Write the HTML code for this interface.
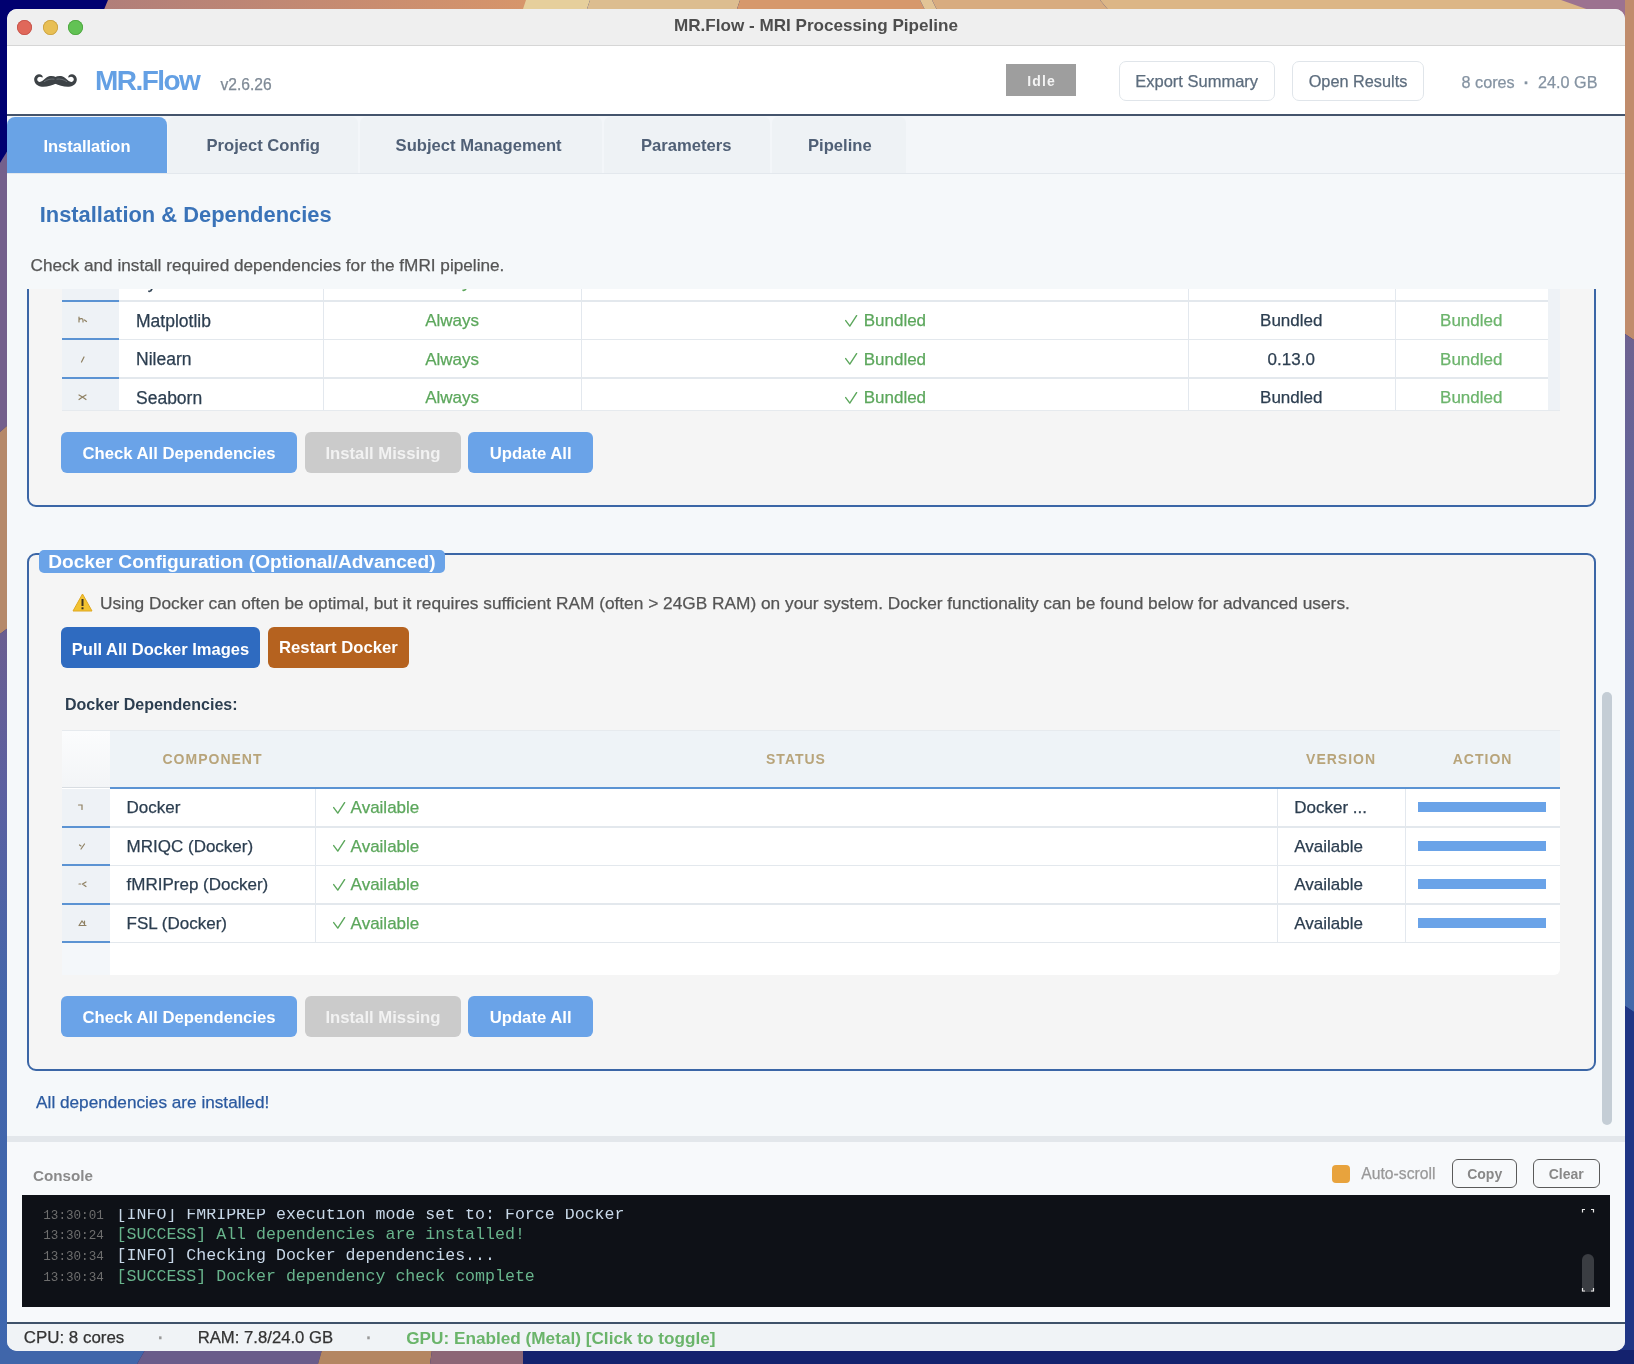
<!DOCTYPE html>
<html><head><meta charset="utf-8"><title>MR.Flow</title>
<style>html,body{margin:0;padding:0;width:1634px;height:1364px;overflow:hidden;background:#1b2a78}
body{position:relative;font-family:'Liberation Sans',sans-serif;-webkit-font-smoothing:antialiased}</style></head><body>

<svg style="position:absolute;left:0;top:0" width="1634" height="1364" viewBox="0 0 1634 1364">
 <defs>
  <linearGradient id="gt1" x1="0" x2="1" y1="0" y2="0">
   <stop offset="0" stop-color="#b07e7a"/>
   <stop offset="1" stop-color="#d8966a"/>
  </linearGradient>
  <linearGradient id="gl1" x1="0" x2="0" y1="0" y2="1">
   <stop offset="0" stop-color="#6a5e90"/>
   <stop offset="0.22" stop-color="#5c60a0"/>
   <stop offset="0.5" stop-color="#4466aa"/>
   <stop offset="1" stop-color="#3d66ae"/>
  </linearGradient>
  <linearGradient id="gr1" x1="0" x2="0" y1="0" y2="1">
   <stop offset="0" stop-color="#6e6290"/>
   <stop offset="0.4" stop-color="#5a64a0"/>
   <stop offset="0.7" stop-color="#4466a8"/>
   <stop offset="1" stop-color="#4268aa"/>
  </linearGradient>
 </defs>
 <rect x="0" y="0" width="1634" height="1364" fill="#16267a"/>
 <rect x="0" y="0" width="40" height="40" fill="#000070"/>
 <rect x="1590" y="0" width="44" height="40" fill="#d4a47c"/>
 <rect x="0" y="1320" width="40" height="44" fill="#4066aa"/>
 <rect x="1590" y="1320" width="44" height="44" fill="#1f3585"/>
 <!-- top strip -->
 <rect x="100" y="0" width="440" height="12" fill="url(#gt1)"/>
 <polygon points="0,0 108,0 103,12 0,12" fill="#000070"/>
 <polygon points="526,0 590,0 586,12 522,12" fill="#e6cf9c"/>
 <polygon points="590,0 740,0 736,12 586,12" fill="#dcbd90"/>
 <polygon points="740,0 920,0 926,12 736,12" fill="#d6986c"/>
 <polygon points="920,0 932,0 938,12 926,12" fill="#e2c496"/>
 <polygon points="932,0 1100,0 1110,12 938,12" fill="#d8ac80"/>
 <polygon points="1100,0 1634,0 1634,40 1590,40 1590,12 1110,12" fill="#dcb686"/>
 <polygon points="1561,0 1634,0 1634,26" fill="#9c7290"/>
 <!-- left strip -->
 <polygon points="0,0 8,0 8,150 0,163" fill="#000070"/>
 <polygon points="0,163 8,150 8,425 0,432" fill="#74608c"/>
 <polygon points="0,432 8,425 8,628 0,634" fill="#b5896a"/>
 <polygon points="0,634 8,628 8,1364 0,1364" fill="url(#gl1)"/>
 <!-- right strip -->
 <polygon points="1625,0 1634,0 1634,340 1625,334" fill="#c08c6c"/>
 <polygon points="1625,334 1634,340 1634,1012 1625,1006" fill="url(#gr1)"/>
 <polygon points="1625,1006 1634,1012 1634,1364 1625,1364" fill="#1f3585"/>
 <!-- bottom strip -->
 <polygon points="0,1350 145,1350 137,1364 0,1364" fill="#4066aa"/>
 <polygon points="145,1350 322,1350 318,1364 137,1364" fill="#6a5c8a"/>
 <polygon points="322,1350 432,1350 430,1364 318,1364" fill="#b48662"/>
 <polygon points="432,1350 523,1350 523,1364 430,1364" fill="#8c6676"/>
 <polygon points="523,1350 1634,1350 1634,1364 523,1364" fill="#14226e"/>
</svg>
<div style="position:absolute;left:7px;top:9px;width:1618px;height:1342px;border-radius:10px;overflow:hidden;background:#f5f8fa;will-change:transform">
<div style="position:absolute;left:-7px;top:-9px;width:1634px;height:1364px">
<div style="position:absolute;left:0px;top:9px;width:1634px;height:36px;background:#efefef"></div>
<div style="position:absolute;left:0px;top:45px;width:1634px;height:1px;background:#d6d6d6"></div>
<div style="position:absolute;left:17.1px;top:19.5px;width:15.0px;height:15.0px;border-radius:50%;background:#e0685a;box-shadow:inset 0 0 0 0.8px #c4524a"></div>
<div style="position:absolute;left:42.9px;top:19.5px;width:15.0px;height:15.0px;border-radius:50%;background:#e8bf54;box-shadow:inset 0 0 0 0.8px #c9a040"></div>
<div style="position:absolute;left:68.4px;top:19.5px;width:15.0px;height:15.0px;border-radius:50%;background:#62c254;box-shadow:inset 0 0 0 0.8px #4da43f"></div>
<div style="position:absolute;top:17.32px;font-family:'Liberation Sans', sans-serif;font-size:17.1px;line-height:17.1px;color:#4d4d4d;font-weight:bold;white-space:pre;left:216px;width:1200px;text-align:center;">MR.Flow - MRI Processing Pipeline</div>
<div style="position:absolute;left:0px;top:46px;width:1634px;height:68px;background:#ffffff"></div>
<div style="position:absolute;left:0px;top:114px;width:1634px;height:2px;background:#44546c"></div>
<svg style="position:absolute;left:28px;top:66px" width="56" height="28" viewBox="0 0 56 28">
<path d="M28.2,11.3 C25,9.6 20.5,9.6 17.5,12.2 C15.5,14 13.5,16 11.5,15.9 C9.8,15.8 8.9,14.2 9.3,12.8 C9.7,11.3 11.2,10.6 12.6,10.9 C13.6,11.1 14.3,11.6 14.7,11.4 C15.2,9.5 13,8 10.8,8.2 C8,8.5 6.1,11 6.2,13.8 C6.3,17.5 9.5,20.4 14,20.7 C19,21 24,19.5 28.2,17.5 Z" fill="#3d4246"/>
<path d="M28.2,11.3 C25,9.6 20.5,9.6 17.5,12.2 C15.5,14 13.5,16 11.5,15.9 C9.8,15.8 8.9,14.2 9.3,12.8 C9.7,11.3 11.2,10.6 12.6,10.9 C13.6,11.1 14.3,11.6 14.7,11.4 C15.2,9.5 13,8 10.8,8.2 C8,8.5 6.1,11 6.2,13.8 C6.3,17.5 9.5,20.4 14,20.7 C19,21 24,19.5 28.2,17.5 Z" fill="#3d4246" transform="translate(55,0) scale(-1,1)"/>
<path d="M16,15.8 C19,13.5 23,12.6 26.5,13.2" stroke="#8a9096" stroke-width="0.8" fill="none" opacity="0.7"/>
<path d="M39,15.8 C36,13.5 32,12.6 28.5,13.2" stroke="#8a9096" stroke-width="0.8" fill="none" opacity="0.7"/>
</svg>
<div style="position:absolute;top:67.40px;font-family:'Liberation Sans', sans-serif;font-size:28px;line-height:28px;color:#64a0e4;font-weight:bold;white-space:pre;letter-spacing:-1.55px;left:95.0px;">MR.Flow</div>
<div style="position:absolute;top:76.59px;font-family:'Liberation Sans', sans-serif;font-size:15.6px;line-height:15.6px;color:#7f8a96;font-weight:normal;white-space:pre;-webkit-text-stroke:0.25px currentColor;left:220.5px;">v2.6.26</div>
<div style="position:absolute;left:1006px;top:64px;width:70px;height:32px;background:#9e9e9e"></div>
<div style="position:absolute;top:73.95px;font-family:'Liberation Sans', sans-serif;font-size:14px;line-height:14px;color:#f4f4f4;font-weight:bold;white-space:pre;letter-spacing:1.2px;left:441px;width:1200px;text-align:center;text-indent:1.2px;">Idle</div>
<div style="position:absolute;left:1118.5px;top:60.5px;width:156.5px;height:40.0px;border:1px solid #e0e5ea;border-radius:7px;background:#fff;box-sizing:border-box"></div>
<div style="position:absolute;top:72.73px;font-family:'Liberation Sans', sans-serif;font-size:16.5px;line-height:16.5px;color:#5d6d7e;font-weight:normal;white-space:pre;-webkit-text-stroke:0.25px currentColor;left:596.7px;width:1200px;text-align:center;">Export Summary</div>
<div style="position:absolute;left:1292px;top:60.5px;width:132px;height:40.0px;border:1px solid #e0e5ea;border-radius:7px;background:#fff;box-sizing:border-box"></div>
<div style="position:absolute;top:72.90px;font-family:'Liberation Sans', sans-serif;font-size:16.3px;line-height:16.3px;color:#5d6d7e;font-weight:normal;white-space:pre;-webkit-text-stroke:0.25px currentColor;left:758px;width:1200px;text-align:center;">Open Results</div>
<div style="position:absolute;top:73.79px;font-family:'Liberation Sans', sans-serif;font-size:16.2px;line-height:16.2px;color:#8593a2;font-weight:normal;white-space:pre;-webkit-text-stroke:0.25px currentColor;left:1461.6px;">8 cores  <b>·</b>  24.0 GB</div>
<div style="position:absolute;left:0px;top:116px;width:1634px;height:57px;background:#f3f6f9"></div>
<div style="position:absolute;left:0px;top:173px;width:1634px;height:1px;background:#e3e8ed"></div>
<div style="position:absolute;left:7px;top:117px;width:160px;height:56px;background:#69a3e6;border-radius:8px 8px 0 0"></div>
<div style="position:absolute;top:138.03px;font-family:'Liberation Sans', sans-serif;font-size:16.5px;line-height:16.5px;color:#ffffff;font-weight:bold;white-space:pre;left:43.4px;">Installation</div>
<div style="position:absolute;left:168px;top:117px;width:189.5px;height:56px;background:#eef2f5;border-radius:6px 6px 0 0"></div>
<div style="position:absolute;top:138.15px;font-family:'Liberation Sans', sans-serif;font-size:16.6px;line-height:16.6px;color:#506076;font-weight:bold;white-space:pre;left:206.5px;">Project Config</div>
<div style="position:absolute;left:359.5px;top:117px;width:242.89999999999998px;height:56px;background:#eef2f5;border-radius:6px 6px 0 0"></div>
<div style="position:absolute;top:138.15px;font-family:'Liberation Sans', sans-serif;font-size:16.6px;line-height:16.6px;color:#506076;font-weight:bold;white-space:pre;left:395.6px;">Subject Management</div>
<div style="position:absolute;left:604.4px;top:117px;width:165.30000000000007px;height:56px;background:#eef2f5;border-radius:6px 6px 0 0"></div>
<div style="position:absolute;top:138.15px;font-family:'Liberation Sans', sans-serif;font-size:16.6px;line-height:16.6px;color:#506076;font-weight:bold;white-space:pre;left:641px;">Parameters</div>
<div style="position:absolute;left:771.7px;top:117px;width:134.29999999999995px;height:56px;background:#eef2f5;border-radius:6px 6px 0 0"></div>
<div style="position:absolute;top:138.15px;font-family:'Liberation Sans', sans-serif;font-size:16.6px;line-height:16.6px;color:#506076;font-weight:bold;white-space:pre;left:808px;">Pipeline</div>
<div style="position:absolute;top:203.96px;font-family:'Liberation Sans', sans-serif;font-size:21.9px;line-height:21.9px;color:#3a73b8;font-weight:bold;white-space:pre;left:39.7px;">Installation &amp; Dependencies</div>
<div style="position:absolute;top:257.24px;font-family:'Liberation Sans', sans-serif;font-size:17.2px;line-height:17.2px;color:#555555;font-weight:normal;white-space:pre;-webkit-text-stroke:0.25px currentColor;left:30.5px;">Check and install required dependencies for the fMRI pipeline.</div>
<div style="position:absolute;left:0;top:289px;width:1634px;height:847px;overflow:hidden">
<div style="position:absolute;left:0;top:-289px;width:1634px;height:1364px">
<div style="position:absolute;left:27px;top:150px;width:1569px;height:357px;border:2px solid #3b66a6;border-radius:9px;background:#f5f5f5;box-sizing:border-box"></div>
<div style="position:absolute;left:62px;top:250px;width:1486px;height:160px;background:#ffffff"></div>
<div style="position:absolute;left:1548px;top:250px;width:12px;height:160px;background:#eef2f6"></div>
<div style="position:absolute;left:62px;top:250px;width:56.5px;height:160px;background:#eef2f6"></div>
<div style="position:absolute;left:323.4px;top:250px;width:1.0px;height:160px;background:#e3e8ee"></div>
<div style="position:absolute;left:580.7px;top:250px;width:1.0px;height:160px;background:#e3e8ee"></div>
<div style="position:absolute;left:1188px;top:250px;width:1px;height:160px;background:#e3e8ee"></div>
<div style="position:absolute;left:1394.5px;top:250px;width:1.0px;height:160px;background:#e3e8ee"></div>
<div style="position:absolute;left:118.5px;top:300.3px;width:1429.5px;height:1.5px;background:#e3e8ed"></div>
<div style="position:absolute;left:62px;top:299.5px;width:56.5px;height:2.0px;background:#5b93d3"></div>
<div style="position:absolute;left:118.5px;top:338.8px;width:1429.5px;height:1.5px;background:#e3e8ed"></div>
<div style="position:absolute;left:62px;top:338px;width:56.5px;height:2px;background:#5b93d3"></div>
<div style="position:absolute;left:118.5px;top:377.3px;width:1429.5px;height:1.5px;background:#e3e8ed"></div>
<div style="position:absolute;left:62px;top:376.5px;width:56.5px;height:2.0px;background:#5b93d3"></div>
<div style="position:absolute;left:62px;top:409.5px;width:1498px;height:1.0px;background:#e6eaee"></div>
<div style="position:absolute;top:274.09px;font-family:'Liberation Sans', sans-serif;font-size:17.5px;line-height:17.5px;color:#2c3e50;font-weight:normal;white-space:pre;-webkit-text-stroke:0.25px currentColor;left:136px;">PyBIDS</div>
<div style="position:absolute;top:273.51px;font-family:'Liberation Sans', sans-serif;font-size:17px;line-height:17px;color:#5ca75c;font-weight:normal;white-space:pre;-webkit-text-stroke:0.25px currentColor;left:-147.95px;width:1200px;text-align:center;">Always</div>
<svg style="position:absolute;left:844.6px;top:276.2px" width="13" height="13" viewBox="0 0 13 13"><polyline points="0.7,5.6 4.8,11.1 11.6,0.7" fill="none" stroke="#5ca75c" stroke-width="1.4" stroke-linecap="round" stroke-linejoin="round"/></svg>
<div style="position:absolute;top:273.51px;font-family:'Liberation Sans', sans-serif;font-size:17px;line-height:17px;color:#5ca75c;font-weight:normal;white-space:pre;-webkit-text-stroke:0.25px currentColor;left:863.7px;">Bundled</div>
<div style="position:absolute;top:273.51px;font-family:'Liberation Sans', sans-serif;font-size:17px;line-height:17px;color:#2c3e50;font-weight:normal;white-space:pre;-webkit-text-stroke:0.25px currentColor;left:691.25px;width:1200px;text-align:center;">Bundled</div>
<div style="position:absolute;top:273.51px;font-family:'Liberation Sans', sans-serif;font-size:17px;line-height:17px;color:#6cb46c;font-weight:normal;white-space:pre;-webkit-text-stroke:0.25px currentColor;left:871.25px;width:1200px;text-align:center;">Bundled</div>
<div style="position:absolute;top:312.59px;font-family:'Liberation Sans', sans-serif;font-size:17.5px;line-height:17.5px;color:#2c3e50;font-weight:normal;white-space:pre;-webkit-text-stroke:0.25px currentColor;left:136px;">Matplotlib</div>
<div style="position:absolute;top:312.01px;font-family:'Liberation Sans', sans-serif;font-size:17px;line-height:17px;color:#5ca75c;font-weight:normal;white-space:pre;-webkit-text-stroke:0.25px currentColor;left:-147.95px;width:1200px;text-align:center;">Always</div>
<svg style="position:absolute;left:844.6px;top:314.7px" width="13" height="13" viewBox="0 0 13 13"><polyline points="0.7,5.6 4.8,11.1 11.6,0.7" fill="none" stroke="#5ca75c" stroke-width="1.4" stroke-linecap="round" stroke-linejoin="round"/></svg>
<div style="position:absolute;top:312.01px;font-family:'Liberation Sans', sans-serif;font-size:17px;line-height:17px;color:#5ca75c;font-weight:normal;white-space:pre;-webkit-text-stroke:0.25px currentColor;left:863.7px;">Bundled</div>
<div style="position:absolute;top:312.01px;font-family:'Liberation Sans', sans-serif;font-size:17px;line-height:17px;color:#2c3e50;font-weight:normal;white-space:pre;-webkit-text-stroke:0.25px currentColor;left:691.25px;width:1200px;text-align:center;">Bundled</div>
<div style="position:absolute;top:312.01px;font-family:'Liberation Sans', sans-serif;font-size:17px;line-height:17px;color:#6cb46c;font-weight:normal;white-space:pre;-webkit-text-stroke:0.25px currentColor;left:871.25px;width:1200px;text-align:center;">Bundled</div>
<div style="position:absolute;top:351.09px;font-family:'Liberation Sans', sans-serif;font-size:17.5px;line-height:17.5px;color:#2c3e50;font-weight:normal;white-space:pre;-webkit-text-stroke:0.25px currentColor;left:136px;">Nilearn</div>
<div style="position:absolute;top:350.51px;font-family:'Liberation Sans', sans-serif;font-size:17px;line-height:17px;color:#5ca75c;font-weight:normal;white-space:pre;-webkit-text-stroke:0.25px currentColor;left:-147.95px;width:1200px;text-align:center;">Always</div>
<svg style="position:absolute;left:844.6px;top:353.2px" width="13" height="13" viewBox="0 0 13 13"><polyline points="0.7,5.6 4.8,11.1 11.6,0.7" fill="none" stroke="#5ca75c" stroke-width="1.4" stroke-linecap="round" stroke-linejoin="round"/></svg>
<div style="position:absolute;top:350.51px;font-family:'Liberation Sans', sans-serif;font-size:17px;line-height:17px;color:#5ca75c;font-weight:normal;white-space:pre;-webkit-text-stroke:0.25px currentColor;left:863.7px;">Bundled</div>
<div style="position:absolute;top:350.51px;font-family:'Liberation Sans', sans-serif;font-size:17px;line-height:17px;color:#2c3e50;font-weight:normal;white-space:pre;-webkit-text-stroke:0.25px currentColor;left:691.25px;width:1200px;text-align:center;">0.13.0</div>
<div style="position:absolute;top:350.51px;font-family:'Liberation Sans', sans-serif;font-size:17px;line-height:17px;color:#6cb46c;font-weight:normal;white-space:pre;-webkit-text-stroke:0.25px currentColor;left:871.25px;width:1200px;text-align:center;">Bundled</div>
<div style="position:absolute;top:389.59px;font-family:'Liberation Sans', sans-serif;font-size:17.5px;line-height:17.5px;color:#2c3e50;font-weight:normal;white-space:pre;-webkit-text-stroke:0.25px currentColor;left:136px;">Seaborn</div>
<div style="position:absolute;top:389.01px;font-family:'Liberation Sans', sans-serif;font-size:17px;line-height:17px;color:#5ca75c;font-weight:normal;white-space:pre;-webkit-text-stroke:0.25px currentColor;left:-147.95px;width:1200px;text-align:center;">Always</div>
<svg style="position:absolute;left:844.6px;top:391.7px" width="13" height="13" viewBox="0 0 13 13"><polyline points="0.7,5.6 4.8,11.1 11.6,0.7" fill="none" stroke="#5ca75c" stroke-width="1.4" stroke-linecap="round" stroke-linejoin="round"/></svg>
<div style="position:absolute;top:389.01px;font-family:'Liberation Sans', sans-serif;font-size:17px;line-height:17px;color:#5ca75c;font-weight:normal;white-space:pre;-webkit-text-stroke:0.25px currentColor;left:863.7px;">Bundled</div>
<div style="position:absolute;top:389.01px;font-family:'Liberation Sans', sans-serif;font-size:17px;line-height:17px;color:#2c3e50;font-weight:normal;white-space:pre;-webkit-text-stroke:0.25px currentColor;left:691.25px;width:1200px;text-align:center;">Bundled</div>
<div style="position:absolute;top:389.01px;font-family:'Liberation Sans', sans-serif;font-size:17px;line-height:17px;color:#6cb46c;font-weight:normal;white-space:pre;-webkit-text-stroke:0.25px currentColor;left:871.25px;width:1200px;text-align:center;">Bundled</div>
<svg style="position:absolute;left:77.5px;top:316.3px" width="10" height="8" viewBox="0 0 10 8"><path d="M1,1 L1,6 M1,3.5 C3,2 5,2.5 5,4 L5,6 M6.5,4 L8.5,5.5" fill="none" stroke="#8f8062" stroke-width="1.2" stroke-linecap="round"/></svg>
<svg style="position:absolute;left:79.5px;top:355.5px" width="10" height="8" viewBox="0 0 10 8"><path d="M4,1 L1.5,6" fill="none" stroke="#8f8062" stroke-width="1.2" stroke-linecap="round"/></svg>
<svg style="position:absolute;left:77.5px;top:393.5px" width="10" height="8" viewBox="0 0 10 8"><path d="M1,1 L4.5,3 L1,5.5 M8,1 L4.5,3 L8,5.5" fill="none" stroke="#8f8062" stroke-width="1.2" stroke-linecap="round"/></svg>
<div style="position:absolute;left:61px;top:432px;width:236px;height:41px;background:#6aa3e8;border-radius:6px"></div>
<div style="position:absolute;top:445.86px;font-family:'Liberation Sans', sans-serif;font-size:16.7px;line-height:16.7px;color:#ffffff;font-weight:bold;white-space:pre;left:-421.0px;width:1200px;text-align:center;">Check All Dependencies</div>
<div style="position:absolute;left:305.3px;top:432px;width:155.3px;height:41px;background:#cbcbcb;border-radius:6px"></div>
<div style="position:absolute;top:445.86px;font-family:'Liberation Sans', sans-serif;font-size:16.7px;line-height:16.7px;color:#f2f2f2;font-weight:bold;white-space:pre;left:-217.04999999999995px;width:1200px;text-align:center;">Install Missing</div>
<div style="position:absolute;left:468px;top:432px;width:125.20000000000005px;height:41px;background:#6aa3e8;border-radius:6px"></div>
<div style="position:absolute;top:445.86px;font-family:'Liberation Sans', sans-serif;font-size:16.7px;line-height:16.7px;color:#ffffff;font-weight:bold;white-space:pre;left:-69.39999999999998px;width:1200px;text-align:center;">Update All</div>
<div style="position:absolute;left:27px;top:553px;width:1569px;height:518px;border:2px solid #3b66a6;border-radius:9px;background:#f5f5f5;box-sizing:border-box"></div>
<div style="position:absolute;left:38.8px;top:550px;width:406.2px;height:23px;background:#6aa3e8;border-radius:5px"></div>
<div style="position:absolute;top:552.03px;font-family:'Liberation Sans', sans-serif;font-size:19.1px;line-height:19.1px;color:#ffffff;font-weight:bold;white-space:pre;left:48.3px;">Docker Configuration (Optional/Advanced)</div>
<svg style="position:absolute;left:72px;top:593px" width="21" height="19" viewBox="0 0 21 19">
<path d="M10.5 1 L20 18 L1 18 Z" fill="#f2c230" stroke="#e0a820" stroke-width="1" stroke-linejoin="round"/>
<rect x="9.5" y="6" width="2" height="7" fill="#3a3020"/><rect x="9.5" y="14.3" width="2" height="2" fill="#3a3020"/>
</svg>
<div style="position:absolute;top:594.86px;font-family:'Liberation Sans', sans-serif;font-size:17.3px;line-height:17.3px;color:#555555;font-weight:normal;white-space:pre;-webkit-text-stroke:0.25px currentColor;left:100px;">Using Docker can often be optimal, but it requires sufficient RAM (often &gt; 24GB RAM) on your system. Docker functionality can be found below for advanced users.</div>
<div style="position:absolute;left:61px;top:627px;width:199px;height:41px;background:#2f6bc0;border-radius:6px"></div>
<div style="position:absolute;top:640.63px;font-family:'Liberation Sans', sans-serif;font-size:16.5px;line-height:16.5px;color:#ffffff;font-weight:bold;white-space:pre;left:-439.5px;width:1200px;text-align:center;">Pull All Docker Images</div>
<div style="position:absolute;left:268px;top:627px;width:140.8px;height:41px;background:#b5621f;border-radius:6px"></div>
<div style="position:absolute;top:640.46px;font-family:'Liberation Sans', sans-serif;font-size:16.7px;line-height:16.7px;color:#ffffff;font-weight:bold;white-space:pre;left:-261.6px;width:1200px;text-align:center;">Restart Docker</div>
<div style="position:absolute;top:697.26px;font-family:'Liberation Sans', sans-serif;font-size:16px;line-height:16px;color:#2c3e50;font-weight:bold;white-space:pre;left:65px;">Docker Dependencies:</div>
<div style="position:absolute;left:62px;top:729.5px;width:1497.5px;height:245.5px;background:#ffffff;border-radius:0 0 6px 6px"></div>
<div style="position:absolute;left:62px;top:729.5px;width:1497.5px;height:1.0px;background:#e6eaee"></div>
<div style="position:absolute;left:109.5px;top:730.5px;width:1450.0px;height:56.0px;background:#eef3f7"></div>
<div style="position:absolute;left:62px;top:730.5px;width:47.5px;height:56.0px;background:linear-gradient(#fbfcfd,#f3f5f7)"></div>
<div style="position:absolute;left:109.5px;top:786.5px;width:1450.0px;height:2.0px;background:#5b93d3"></div>
<div style="position:absolute;left:62px;top:786.5px;width:47.5px;height:1.0px;background:#d8dde2"></div>
<div style="position:absolute;left:62px;top:788.5px;width:47.5px;height:153.5px;background:#eef2f6"></div>
<div style="position:absolute;left:62px;top:942px;width:47.5px;height:33px;background:#f4f7fa"></div>
<div style="position:absolute;left:314.5px;top:788.5px;width:1.0px;height:153.5px;background:#e3e8ee"></div>
<div style="position:absolute;left:1276.5px;top:788.5px;width:1.0px;height:153.5px;background:#e3e8ee"></div>
<div style="position:absolute;left:1404.7px;top:788.5px;width:1.0px;height:153.5px;background:#e3e8ee"></div>
<div style="position:absolute;top:752.15px;font-family:'Liberation Sans', sans-serif;font-size:14px;line-height:14px;color:#b8a47a;font-weight:bold;white-space:pre;letter-spacing:1px;left:-388.0px;width:1200px;text-align:center;text-indent:1px;">COMPONENT</div>
<div style="position:absolute;top:752.15px;font-family:'Liberation Sans', sans-serif;font-size:14px;line-height:14px;color:#b8a47a;font-weight:bold;white-space:pre;letter-spacing:1px;left:195.5px;width:1200px;text-align:center;text-indent:1px;">STATUS</div>
<div style="position:absolute;top:752.15px;font-family:'Liberation Sans', sans-serif;font-size:14px;line-height:14px;color:#b8a47a;font-weight:bold;white-space:pre;letter-spacing:1px;left:740.5999999999999px;width:1200px;text-align:center;text-indent:1px;">VERSION</div>
<div style="position:absolute;top:752.15px;font-family:'Liberation Sans', sans-serif;font-size:14px;line-height:14px;color:#b8a47a;font-weight:bold;white-space:pre;letter-spacing:1px;left:882.0999999999999px;width:1200px;text-align:center;text-indent:1px;">ACTION</div>
<div style="position:absolute;left:109.5px;top:826.3px;width:1450.0px;height:1.5px;background:#e3e8ed"></div>
<div style="position:absolute;left:62px;top:825.5px;width:47.5px;height:2.0px;background:#5b93d3"></div>
<div style="position:absolute;left:109.5px;top:864.8px;width:1450.0px;height:1.5px;background:#e3e8ed"></div>
<div style="position:absolute;left:62px;top:864px;width:47.5px;height:2px;background:#5b93d3"></div>
<div style="position:absolute;left:109.5px;top:903.3px;width:1450.0px;height:1.5px;background:#e3e8ed"></div>
<div style="position:absolute;left:62px;top:902.5px;width:47.5px;height:2.0px;background:#5b93d3"></div>
<div style="position:absolute;left:109.5px;top:941.8px;width:1450.0px;height:1.5px;background:#e3e8ed"></div>
<div style="position:absolute;left:62px;top:941px;width:47.5px;height:2px;background:#5b93d3"></div>
<div style="position:absolute;top:799.41px;font-family:'Liberation Sans', sans-serif;font-size:17px;line-height:17px;color:#2c3e50;font-weight:normal;white-space:pre;-webkit-text-stroke:0.25px currentColor;left:126.6px;">Docker</div>
<svg style="position:absolute;left:333.0px;top:801.5999999999999px" width="13" height="13" viewBox="0 0 13 13"><polyline points="0.7,5.6 4.8,11.1 11.6,0.7" fill="none" stroke="#5ca75c" stroke-width="1.4" stroke-linecap="round" stroke-linejoin="round"/></svg>
<div style="position:absolute;top:799.41px;font-family:'Liberation Sans', sans-serif;font-size:17px;line-height:17px;color:#5ca75c;font-weight:normal;white-space:pre;-webkit-text-stroke:0.25px currentColor;left:350.6px;">Available</div>
<div style="position:absolute;top:799.41px;font-family:'Liberation Sans', sans-serif;font-size:17px;line-height:17px;color:#2c3e50;font-weight:normal;white-space:pre;-webkit-text-stroke:0.25px currentColor;left:1294.3px;">Docker ...</div>
<div style="position:absolute;left:1418.4px;top:802.0px;width:127.19999999999982px;height:10.200000000000045px;background:#6aa3e8"></div>
<div style="position:absolute;top:837.91px;font-family:'Liberation Sans', sans-serif;font-size:17px;line-height:17px;color:#2c3e50;font-weight:normal;white-space:pre;-webkit-text-stroke:0.25px currentColor;left:126.6px;">MRIQC (Docker)</div>
<svg style="position:absolute;left:333.0px;top:840.0999999999999px" width="13" height="13" viewBox="0 0 13 13"><polyline points="0.7,5.6 4.8,11.1 11.6,0.7" fill="none" stroke="#5ca75c" stroke-width="1.4" stroke-linecap="round" stroke-linejoin="round"/></svg>
<div style="position:absolute;top:837.91px;font-family:'Liberation Sans', sans-serif;font-size:17px;line-height:17px;color:#5ca75c;font-weight:normal;white-space:pre;-webkit-text-stroke:0.25px currentColor;left:350.6px;">Available</div>
<div style="position:absolute;top:837.91px;font-family:'Liberation Sans', sans-serif;font-size:17px;line-height:17px;color:#2c3e50;font-weight:normal;white-space:pre;-webkit-text-stroke:0.25px currentColor;left:1294.3px;">Available</div>
<div style="position:absolute;left:1418.4px;top:840.5px;width:127.19999999999982px;height:10.200000000000045px;background:#6aa3e8"></div>
<div style="position:absolute;top:876.41px;font-family:'Liberation Sans', sans-serif;font-size:17px;line-height:17px;color:#2c3e50;font-weight:normal;white-space:pre;-webkit-text-stroke:0.25px currentColor;left:126.6px;">fMRIPrep (Docker)</div>
<svg style="position:absolute;left:333.0px;top:878.5999999999999px" width="13" height="13" viewBox="0 0 13 13"><polyline points="0.7,5.6 4.8,11.1 11.6,0.7" fill="none" stroke="#5ca75c" stroke-width="1.4" stroke-linecap="round" stroke-linejoin="round"/></svg>
<div style="position:absolute;top:876.41px;font-family:'Liberation Sans', sans-serif;font-size:17px;line-height:17px;color:#5ca75c;font-weight:normal;white-space:pre;-webkit-text-stroke:0.25px currentColor;left:350.6px;">Available</div>
<div style="position:absolute;top:876.41px;font-family:'Liberation Sans', sans-serif;font-size:17px;line-height:17px;color:#2c3e50;font-weight:normal;white-space:pre;-webkit-text-stroke:0.25px currentColor;left:1294.3px;">Available</div>
<div style="position:absolute;left:1418.4px;top:879.0px;width:127.19999999999982px;height:10.200000000000045px;background:#6aa3e8"></div>
<div style="position:absolute;top:914.91px;font-family:'Liberation Sans', sans-serif;font-size:17px;line-height:17px;color:#2c3e50;font-weight:normal;white-space:pre;-webkit-text-stroke:0.25px currentColor;left:126.6px;">FSL (Docker)</div>
<svg style="position:absolute;left:333.0px;top:917.0999999999999px" width="13" height="13" viewBox="0 0 13 13"><polyline points="0.7,5.6 4.8,11.1 11.6,0.7" fill="none" stroke="#5ca75c" stroke-width="1.4" stroke-linecap="round" stroke-linejoin="round"/></svg>
<div style="position:absolute;top:914.91px;font-family:'Liberation Sans', sans-serif;font-size:17px;line-height:17px;color:#5ca75c;font-weight:normal;white-space:pre;-webkit-text-stroke:0.25px currentColor;left:350.6px;">Available</div>
<div style="position:absolute;top:914.91px;font-family:'Liberation Sans', sans-serif;font-size:17px;line-height:17px;color:#2c3e50;font-weight:normal;white-space:pre;-webkit-text-stroke:0.25px currentColor;left:1294.3px;">Available</div>
<div style="position:absolute;left:1418.4px;top:917.5px;width:127.19999999999982px;height:10.200000000000045px;background:#6aa3e8"></div>
<svg style="position:absolute;left:76.5px;top:804px" width="10" height="8" viewBox="0 0 10 8"><path d="M1.5,1 L5,1 L5,5.5" fill="none" stroke="#8f8062" stroke-width="1.2" stroke-linecap="round"/></svg>
<svg style="position:absolute;left:77.5px;top:843px" width="10" height="8" viewBox="0 0 10 8"><path d="M1.5,2 L3,3 M6.5,1 L3,6" fill="none" stroke="#8f8062" stroke-width="1.2" stroke-linecap="round"/></svg>
<svg style="position:absolute;left:77.5px;top:881px" width="10" height="8" viewBox="0 0 10 8"><path d="M1,3 L2.5,3 M8,1 L4.5,3 L8,5.5" fill="none" stroke="#8f8062" stroke-width="1.2" stroke-linecap="round"/></svg>
<svg style="position:absolute;left:77.5px;top:920px" width="10" height="8" viewBox="0 0 10 8"><path d="M1,5.5 L4,1 L5.5,3 M2,5.5 L8,5.5 M6.5,1 L6.5,5.5" fill="none" stroke="#8f8062" stroke-width="1.2" stroke-linecap="round"/></svg>
<div style="position:absolute;left:61px;top:996px;width:236px;height:41px;background:#6aa3e8;border-radius:6px"></div>
<div style="position:absolute;top:1009.86px;font-family:'Liberation Sans', sans-serif;font-size:16.7px;line-height:16.7px;color:#ffffff;font-weight:bold;white-space:pre;left:-421.0px;width:1200px;text-align:center;">Check All Dependencies</div>
<div style="position:absolute;left:305.3px;top:996px;width:155.3px;height:41px;background:#cbcbcb;border-radius:6px"></div>
<div style="position:absolute;top:1009.86px;font-family:'Liberation Sans', sans-serif;font-size:16.7px;line-height:16.7px;color:#f2f2f2;font-weight:bold;white-space:pre;left:-217.04999999999995px;width:1200px;text-align:center;">Install Missing</div>
<div style="position:absolute;left:468px;top:996px;width:125.20000000000005px;height:41px;background:#6aa3e8;border-radius:6px"></div>
<div style="position:absolute;top:1009.86px;font-family:'Liberation Sans', sans-serif;font-size:16.7px;line-height:16.7px;color:#ffffff;font-weight:bold;white-space:pre;left:-69.39999999999998px;width:1200px;text-align:center;">Update All</div>
<div style="position:absolute;top:1094.44px;font-family:'Liberation Sans', sans-serif;font-size:17.2px;line-height:17.2px;color:#2b5aa0;font-weight:normal;white-space:pre;-webkit-text-stroke:0.25px currentColor;left:36.1px;">All dependencies are installed!</div>
</div></div>
<div style="position:absolute;left:1602px;top:692px;width:10px;height:433px;background:#c4cdd5;border-radius:5px"></div>
<div style="position:absolute;left:0px;top:1136px;width:1634px;height:6px;background:#e3e7eb"></div>
<div style="position:absolute;left:0px;top:1142px;width:1634px;height:180px;background:#f7f9fb"></div>
<div style="position:absolute;top:1168.13px;font-family:'Liberation Sans', sans-serif;font-size:15.2px;line-height:15.2px;color:#8a8a8a;font-weight:bold;white-space:pre;left:33.1px;">Console</div>
<div style="position:absolute;left:1332.3px;top:1164.7px;width:18.200000000000045px;height:18.0px;background:#e8a33d;border-radius:4px"></div>
<div style="position:absolute;top:1165.71px;font-family:'Liberation Sans', sans-serif;font-size:15.7px;line-height:15.7px;color:#999999;font-weight:normal;white-space:pre;-webkit-text-stroke:0.25px currentColor;left:1361.3px;">Auto-scroll</div>
<div style="position:absolute;left:1452.3px;top:1158.6px;width:64.79999999999995px;height:29.800000000000182px;border:1.5px solid #5a5a5a;border-radius:6px;box-sizing:border-box"></div>
<div style="position:absolute;top:1167.15px;font-family:'Liberation Sans', sans-serif;font-size:14px;line-height:14px;color:#888888;font-weight:bold;white-space:pre;left:884.6999999999998px;width:1200px;text-align:center;">Copy</div>
<div style="position:absolute;left:1533px;top:1158.6px;width:66.5px;height:29.800000000000182px;border:1.5px solid #5a5a5a;border-radius:6px;box-sizing:border-box"></div>
<div style="position:absolute;top:1167.15px;font-family:'Liberation Sans', sans-serif;font-size:14px;line-height:14px;color:#888888;font-weight:bold;white-space:pre;left:966.25px;width:1200px;text-align:center;">Clear</div>
<div style="position:absolute;left:22px;top:1194.5px;width:1588px;height:112.5px;background:#0e1117"></div>
<div style="position:absolute;left:22px;top:1209px;width:1588px;height:98px;overflow:hidden"><div style="position:absolute;left:-22px;top:-1209px;width:1634px;height:1364px">
<div style="position:absolute;top:1209.74px;font-family:'Liberation Mono', monospace;font-size:12.6px;line-height:12.6px;color:#6e6e6e;font-weight:normal;white-space:pre;left:43.3px;">13:30:01</div>
<div style="position:absolute;top:1206.68px;font-family:'Liberation Mono', monospace;font-size:16.6px;line-height:16.6px;color:#c8d8e8;font-weight:normal;white-space:pre;left:116.6px;">[INFO] FMRIPREP execution mode set to: Force Docker</div>
<div style="position:absolute;top:1230.44px;font-family:'Liberation Mono', monospace;font-size:12.6px;line-height:12.6px;color:#6e6e6e;font-weight:normal;white-space:pre;left:43.3px;">13:30:24</div>
<div style="position:absolute;top:1227.38px;font-family:'Liberation Mono', monospace;font-size:16.6px;line-height:16.6px;color:#68b48c;font-weight:normal;white-space:pre;left:116.6px;">[SUCCESS] All dependencies are installed!</div>
<div style="position:absolute;top:1251.14px;font-family:'Liberation Mono', monospace;font-size:12.6px;line-height:12.6px;color:#6e6e6e;font-weight:normal;white-space:pre;left:43.3px;">13:30:34</div>
<div style="position:absolute;top:1248.08px;font-family:'Liberation Mono', monospace;font-size:16.6px;line-height:16.6px;color:#c8d8e8;font-weight:normal;white-space:pre;left:116.6px;">[INFO] Checking Docker dependencies...</div>
<div style="position:absolute;top:1271.84px;font-family:'Liberation Mono', monospace;font-size:12.6px;line-height:12.6px;color:#6e6e6e;font-weight:normal;white-space:pre;left:43.3px;">13:30:34</div>
<div style="position:absolute;top:1268.78px;font-family:'Liberation Mono', monospace;font-size:16.6px;line-height:16.6px;color:#68b48c;font-weight:normal;white-space:pre;left:116.6px;">[SUCCESS] Docker dependency check complete</div>
</div></div>
<div style="position:absolute;left:1582px;top:1254px;width:12px;height:38px;background:#3a3d42;border-radius:6px 6px 1px 1px"></div>
<svg style="position:absolute;left:1580px;top:1207px" width="16" height="90" viewBox="0 0 16 90"><path d="M2.5,5.5 L2.5,2.5 L5,2.5 M11,2.5 L13.5,2.5 L13.5,5.5 M2.5,81 L2.5,84 L5,84 M11,84 L13.5,84 L13.5,81" fill="none" stroke="#e8e8e8" stroke-width="1.2"/></svg>
<div style="position:absolute;left:0px;top:1323.5px;width:1634px;height:40.5px;background:#f0f3f6"></div>
<div style="position:absolute;left:0px;top:1321.8px;width:1634px;height:1.7999999999999545px;background:#3f526a"></div>
<div style="position:absolute;top:1330.29px;font-family:'Liberation Sans', sans-serif;font-size:16.9px;line-height:16.9px;color:#333333;font-weight:normal;white-space:pre;-webkit-text-stroke:0.25px currentColor;left:23.8px;">CPU: 8 cores</div>
<div style="position:absolute;top:1330.46px;font-family:'Liberation Sans', sans-serif;font-size:16px;line-height:16px;color:#999999;font-weight:normal;white-space:pre;-webkit-text-stroke:0.25px currentColor;left:-439.4px;width:1200px;text-align:center;"><b>·</b></div>
<div style="position:absolute;top:1330.26px;font-family:'Liberation Sans', sans-serif;font-size:16.7px;line-height:16.7px;color:#333333;font-weight:normal;white-space:pre;-webkit-text-stroke:0.25px currentColor;left:197.7px;">RAM: 7.8/24.0 GB</div>
<div style="position:absolute;top:1330.46px;font-family:'Liberation Sans', sans-serif;font-size:16px;line-height:16px;color:#999999;font-weight:normal;white-space:pre;-webkit-text-stroke:0.25px currentColor;left:-231.2px;width:1200px;text-align:center;"><b>·</b></div>
<div style="position:absolute;top:1329.84px;font-family:'Liberation Sans', sans-serif;font-size:17.2px;line-height:17.2px;color:#6ab46a;font-weight:bold;white-space:pre;left:406.2px;">GPU: Enabled (Metal) [Click to toggle]</div>
</div></div>
</body></html>
